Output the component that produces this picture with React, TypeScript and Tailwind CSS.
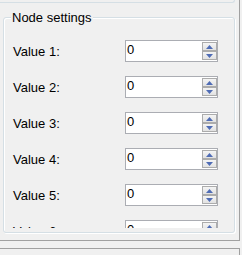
import React from "react";

function SpinBtn({ up }: { up: boolean }) {
  return (
    <div className="w-[15px] h-[9px] border border-[#acacac] bg-gradient-to-b from-[#f4f4f4] to-[#e2e2e2] flex items-center justify-center">
      <svg width="7" height="4" viewBox="0 0 7 4">
        {up ? (
          <polygon points="0,4 7,4 3.5,0" fill="#4f6cb5" />
        ) : (
          <polygon points="0,0 7,0 3.5,4" fill="#4f6cb5" />
        )}
      </svg>
    </div>
  );
}

export default function App() {
  const rows = [1, 2, 3, 4, 5, 6];
  return (
    <div className="w-[242px] h-[255px] bg-[#f0f0f0] overflow-hidden flex flex-col font-['Liberation_Sans',Arial,sans-serif] text-[13px] text-black">
      <div className="w-[240px] h-[241px] shrink-0 border-r border-b border-[#a0a0a0] flex flex-col">
        <div className="h-[3px] w-[235px] shrink-0 border-b border-r border-[#d5dfe5] rounded-br-[3px]" />
        <div className="relative ml-[3px] mt-[14px] w-[232px] h-[216px] shrink-0 border border-[#d5dfe5] rounded-[3px] shadow-[inset_1px_1px_0_#fff,1px_1px_0_#fff]">
          <span className="absolute left-[7px] top-[-7px] px-[1px] bg-[#f0f0f0] leading-[14px] whitespace-nowrap">
            Node settings
          </span>
          <div className="h-[210px] overflow-hidden pt-[22px] pl-[9px] flex flex-col gap-[14px]">
            {rows.map((n) => (
              <div key={n} className="flex items-center h-[22px] shrink-0">
                <div className="w-[112px] mt-[1px] whitespace-nowrap">Value {n}:</div>
                <div className="w-[93px] h-[22px] border border-[#abadb3] bg-white flex">
                  <span className="pl-[1px] leading-[18px]">0</span>
                  <div className="ml-auto flex flex-col py-[1px]">
                    <SpinBtn up />
                    <SpinBtn up={false} />
                  </div>
                </div>
              </div>
            ))}
          </div>
        </div>
      </div>
      <div className="mt-[7px] w-[240px] flex-1 border-t border-r border-[#a0a0a0]" />
    </div>
  );
}
